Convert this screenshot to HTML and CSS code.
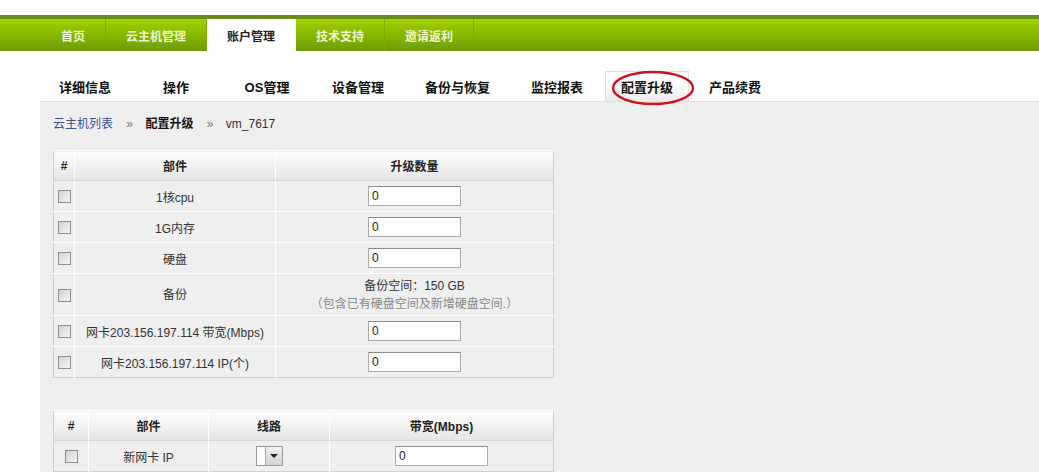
FILE: index.html
```html
<!DOCTYPE html>
<html lang="zh-CN">
<head>
    <meta charset="UTF-8">
    <title>配置升级</title>
    <link rel="stylesheet" href="styles.css">
</head>
<body>

<div class="top-gap"></div>

<!-- main menu -->
<div class="nav">
    <a class="nav-item">首页</a>
    <a class="nav-item">云主机管理</a>
    <a class="nav-item active">账户管理</a>
    <a class="nav-item">技术支持</a>
    <a class="nav-item">邀请返利</a>
</div>

<!-- host tabs -->
<div class="tabs">
    <a class="tab">详细信息</a>
    <a class="tab">操作</a>
    <a class="tab">OS管理</a>
    <a class="tab">设备管理</a>
    <a class="tab wide">备份与恢复</a>
    <a class="tab">监控报表</a>
    <a class="tab active">配置升级</a>
    <a class="tab">产品续费</a>
    <svg class="mark" width="86" height="40" viewBox="0 0 86 40">
        <ellipse cx="43" cy="19" rx="40" ry="16" fill="none" stroke="#cc1122" stroke-width="2.4"/>
    </svg>
</div>

<div class="panel">
    <div class="crumbs">
        <a class="crumb-link">云主机列表</a>
        <span class="sep">»</span>
        <b>配置升级</b>
        <span class="sep">»</span>
        <span>vm_7617</span>
    </div>

    <table class="grid">
        <colgroup><col class="c1"><col class="c2"><col class="c3"></colgroup>
        <tr><th>#</th><th>部件</th><th>升级数量</th></tr>
        <tr><td><span class="check"></span></td><td>1核cpu</td><td><input type="text" value="0"></td></tr>
        <tr><td><span class="check"></span></td><td>1G内存</td><td><input type="text" value="0"></td></tr>
        <tr><td><span class="check"></span></td><td>硬盘</td><td><input type="text" value="0"></td></tr>
        <tr class="tall">
            <td><span class="check"></span></td>
            <td>备份</td>
            <td>备份空间：150 GB<br><span class="note">（包含已有硬盘空间及新增硬盘空间.）</span></td>
        </tr>
        <tr><td><span class="check"></span></td><td>网卡203.156.197.114 带宽(Mbps)</td><td><input type="text" value="0"></td></tr>
        <tr><td><span class="check"></span></td><td>网卡203.156.197.114 IP(个)</td><td><input type="text" value="0"></td></tr>
    </table>

    <table class="grid second">
        <colgroup><col class="d1"><col class="d2"><col class="d3"><col class="d4"></colgroup>
        <tr><th>#</th><th>部件</th><th>线路</th><th>带宽(Mbps)</th></tr>
        <tr>
            <td><span class="check"></span></td>
            <td>新网卡 IP</td>
            <td><span class="select"><span class="arrow"></span></span></td>
            <td><input type="text" value="0"></td>
        </tr>
    </table>
</div>

</body>
</html>
```

FILE: styles.css
```css
body { margin: 0; font-family: "Liberation Sans", "Noto Sans CJK SC", sans-serif; font-size: 12px; color: #333; background: #fff; }
a { cursor: pointer; }

.top-gap { height: 15px; }

.nav { display: flex; height: 32px; padding-left: 41px; border-top: 4px solid #6d8a1d; background: linear-gradient(#9fd200, #86b800 50%, #6c9a06); }
.nav-item { display: flex; align-items: center; padding: 0 20px; border-right: 1px solid #82a80c; color: #eef7d0; font-weight: bold; font-size: 12px; }
.nav-item.active { background: #fff; color: #222; border-right-color: #fff; }

.tabs { position: relative; display: flex; height: 30px; margin-top: 20px; padding-left: 42px; }
.tab { display: flex; align-items: center; justify-content: center; min-width: 54px; padding: 0 16px; margin-right: 5px; font-size: 13px; font-weight: bold; color: #111; }
.tab.wide { margin: 0 8px 0 3px; }
.tab.active { border: 1px solid #dcdcdc; border-bottom: none; background: linear-gradient(#fff, #fafafa 50%, #ececec); padding: 0 14px; margin-right: 3px; }
.mark { position: absolute; left: 610px; top: -2px; }

.panel { margin-left: 40px; min-height: 380px; padding: 14px 0 0 13px; background: #efefef; border-top: 1px solid #e0e0e0; }
.crumbs { height: 16px; line-height: 16px; color: #333; }
.crumb-link { color: #3d4f8e; }
.crumbs b { color: #111; }
.sep { margin: 0 9px 0 10px; color: #777; }

.grid { width: 501px; margin-top: 18px; border-collapse: collapse; border: 1px solid #cfcfcf; table-layout: fixed; }
.grid th { height: 27px; border: 1px solid #fff; border-bottom: 1px solid #d6d6d6; background: linear-gradient(#fbfbfb, #f3f3f3 50%, #e3e3e3); font-weight: bold; color: #222; text-align: center; }
.grid td { height: 30px; padding: 0; border: 1px solid #fff; text-align: center; color: #333; }
.grid tr:last-child td { border-bottom: none; }
.grid td:first-child, .grid th:first-child { border-left: none; }
.grid td:last-child, .grid th:last-child { border-right: none; }
.grid tr.tall td { height: 41px; line-height: 18px; }
.note { color: #888; }

.c1 { width: 21px; }
.c2 { width: 201px; }
.d1 { width: 35px; }
.d2 { width: 120px; }
.d3 { width: 121px; }

.second { margin-top: 32px; }

.check { display: inline-block; width: 11px; height: 11px; vertical-align: middle; border: 1px solid #8e8e8e; background: linear-gradient(135deg, #d2d2d2, #f6f6f6); }

.grid input { width: 93px; height: 20px; box-sizing: border-box; padding: 0 3px; border: 1px solid #a9a9a9; border-top-color: #8a8a8a; background: #fff; font-family: "Liberation Sans", sans-serif; font-size: 12px; color: #222; vertical-align: middle; }

.select { display: inline-flex; justify-content: flex-end; width: 27px; height: 20px; box-sizing: border-box; border: 1px solid #9a9a9a; background: #fff; vertical-align: middle; }
.arrow { position: relative; width: 17px; height: 18px; box-sizing: border-box; border-left: 1px solid #aaa; background: linear-gradient(#f0f0f0, #d4d4d4); }
.arrow::after { content: ""; position: absolute; left: 4px; top: 7px; border-left: 4px solid transparent; border-right: 4px solid transparent; border-top: 4px solid #222; }
```
